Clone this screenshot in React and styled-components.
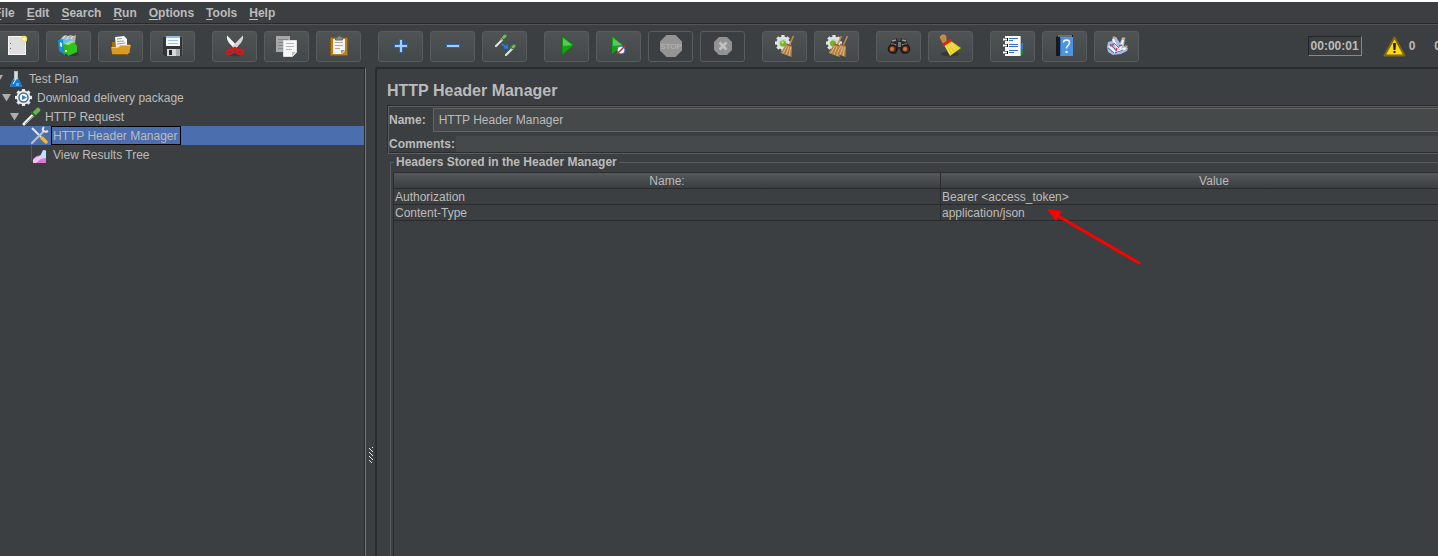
import React from "react";
import styled, { createGlobalStyle, css } from "styled-components";

const Global = createGlobalStyle`
  *, *::before, *::after { box-sizing: border-box; }
  body { margin: 0; background: #3c3f41; }
  body, button, input, table { font-family: "Liberation Sans", Arial, sans-serif; font-size: 12px; color: #bbbbbb; }
`;

const Frame = styled.div`
  display: flex;
  flex-direction: column;
  min-height: 100vh;
  overflow: hidden;
  background: #3c3f41;
  border-top: 2px solid #ffffff;
`;

const MenuBar = styled.nav`
  display: flex;
  gap: 12px;
  height: 22px;
  margin-left: -6px;
  align-items: center;
  border-bottom: 1px solid #27292a;
`;

const MenuItem = styled.button`
  border: 0;
  padding: 0;
  background: none;
  font-weight: bold;
  line-height: 20px;
`;

const Mnemonic = styled.span`
  text-decoration: underline;
  text-underline-offset: 2px;
`;

const ToolBar = styled.div`
  display: flex;
  align-items: center;
  gap: 17px;
  height: 43px;
  border-top: 1px solid #555555;
  margin-left: -6px;
  margin-right: -3px;
`;

const ToolGroup = styled.div`
  display: flex;
  gap: 7px;
`;

const ToolButton = styled.button`
  display: flex;
  align-items: center;
  justify-content: center;
  width: 45px;
  height: 31px;
  padding: 0;
  border: 1px solid #595c5d;
  border-radius: 3px;
  background: linear-gradient(#4f5354, #43484a);
  ${(p) => p.disabled && css`background: #3c3f41;`}
`;

const Status = styled.div`
  display: flex;
  align-items: center;
  margin-left: auto;
  font-weight: bold;
`;

const Timer = styled.time`
  height: 20px;
  line-height: 19px;
  border: 1px solid;
  border-color: #232526 #84898a #84898a #232526;
  padding: 0 2px;
  margin-right: 21px;
`;

const Count = styled.span`
  margin-left: 3px;
  & + & { margin-left: 19px; }
`;

const Body = styled.div`
  display: flex;
  flex: 1;
  min-width: 0;
`;

const TreePane = styled.aside`
  width: 366px;
  flex: none;
  border-top: 2px solid #282b2c;
  border-right: 1px solid #727576;
  box-shadow: inset -1px 0 #2b2d2e;
`;

const TreeRow = styled.div`
  display: flex;
  align-items: center;
  height: 19px;
  margin-right: 1px;
  padding-left: ${(p) => p.$depth * 8}px;
  background: ${(p) => (p.$selected ? "#4b6eaf" : "transparent")};
`;

const Toggle = styled.svg`
  flex: none;
  width: 9px;
  height: 9px;
  margin: 0 3px 0 -6px;
`;

const NodeIcon = styled.svg`
  flex: none;
  width: 19px;
  height: 19px;
`;

const NodeLabel = styled.span`
  height: 19px;
  line-height: 19px;
  margin-left: 2px;
  padding: 0 2px 0 1px;
  border: 1px solid ${(p) => (p.$selected ? "#000000" : "transparent")};
`;

const Splitter = styled.div`
  width: 11px;
  flex: none;
  display: flex;
  justify-content: center;
  border-right: 2px solid #2a2c2d;
  border-top: 2px solid #3c3f41;
  padding-top: 378px;
  padding-left: 2px;
`;

const Editor = styled.main`
  flex: 1;
  min-width: 0;
  display: flex;
  flex-direction: column;
  border-top: 2px solid #282b2c;
  padding-left: 10px;
  margin-right: -50px;
`;

const Title = styled.h1`
  margin: 11px 0 4px;
  font-size: 16px;
  line-height: 21px;
`;

const Fields = styled.div`
  border: 1px solid #2b2d2e;
  border-bottom-color: #5a5d5e;
  box-shadow: inset 1px 1px #5a5d5e, inset 0 -1px #2b2d2e;
  padding: 2px 0 0 1px;
`;

const Field = styled.div`
  display: flex;
  align-items: center;
  height: ${(p) => (p.$plain ? 16 : 24)}px;
  margin-bottom: ${(p) => (p.$plain ? 1 : 4)}px;
`;

const Label = styled.label`
  font-weight: bold;
  white-space: nowrap;
  margin-right: ${(p) => p.$gap}px;
`;

const Input = styled.input`
  flex: 1;
  min-width: 0;
  height: 100%;
  padding: 0 5px;
  border: ${(p) => (p.$plain ? "0" : "1px solid #646464")};
  background: #45494a;
  outline: 0;
`;

const Group = styled.fieldset`
  flex: 1;
  margin: 0 0 0 3px;
  min-width: 0;
  padding: 2px 0 0 2px;
  border: solid #5a5d5e;
  border-width: 1px 0 0 1px;
`;

const Legend = styled.legend`
  margin-left: 1px;
  padding: 0 2px;
  font-weight: bold;
  line-height: 16px;
`;

const TableBox = styled.div`
  height: 100%;
  border-left: 1px solid #2b2d2e;
  border-top: 1px solid #2b2d2e;
`;

const Table = styled.table`
  width: 100%;
  table-layout: fixed;
  border-collapse: separate;
  border-spacing: 0;
`;

const cell = css`
  height: 16px;
  padding: 2px 1px 0;
  line-height: 13px;
  border-right: 1px solid #292b2c;
  border-bottom: 1px solid #292b2c;
`;

const HeadCell = styled.th`
  ${cell}
  font-weight: normal;
  text-align: center;
  background: linear-gradient(#55585a, #3b3e40);
`;

const Cell = styled.td`
  ${cell}
`;

const Pointer = styled.svg`
  position: absolute;
  left: 1045px;
  top: 206px;
  width: 97px;
  height: 60px;
  pointer-events: none;
`;

function Gear({ cx, cy, r, fill = "#e2e4e5" }) {
  return (
    <g>
      {[0, 45, 90, 135].map((a) => (
        <path key={a} d={`M${cx} ${cy - r - 1}V${cy + r + 1}`} stroke={fill} strokeWidth="3.200" transform={`rotate(${a} ${cx} ${cy})`} />
      ))}
      <circle cx={cx} cy={cy} r={r - 0.6} fill={fill} />
      <circle cx={cx} cy={cy} r={r - 2.5} fill="#d2d5d6" />
    </g>
  );
}

function Broom() {
  return (
    <g>
      <path d="M14.500 13 19.500 2" stroke="#b98b52" strokeWidth="1.600" />
      <path d="M12.500 9.500 18 11.500 17.500 23 6.500 19Z" fill="#b5834b" />
      <path d="M13 12 9 19M15 12.500 12 20.500M16.500 13 15 22" stroke="#e1b67a" />
      <path d="M12.500 10 18 12" stroke="#805328" />
    </g>
  );
}

const art = {
  New: (
    <>
      <path d="M4 2h18v19H4z" fill="#f6f6f6" />
      <path d="M5 3h16v17H5z" fill="#dfdfdf" />
      <path d="M6 9.500h1M6 14.500h1" stroke="#666" />
      <circle cx="20" cy="5" r="3.200" fill="#eee36a" /><circle cx="20" cy="5" r="1.600" fill="#fffde0" />
    </>
  ),
  Templates: (
    <>
      <path d="M4 6 7 2l3-1 2 1 3-1 2 1 3-1-1 8H5z" fill="#aeb4b5" />
      <path d="m6 6 3-4m1 4 3-4m1 4 3-4" stroke="#e7e9e9" />
      <path d="m2 6 5-1 2 3v13l-6-4z" fill="#1490dc" /><path d="m7 6 8-1v6l-6 9z" fill="#65bff0" />
      <path d="m4 8 2 1v4l-2-1z" fill="#dff3ff" />
      <ellipse cx="16" cy="20" rx="7" ry="2" fill="#33393a" />
      <path d="m8 10 4-1v12l-4-2z" fill="#38b21d" /><path d="m12 11 6-3 3 4v6l-9 4z" fill="#31c51c" />
      <path d="m8 10 6-3 4 1-6 3z" fill="#95ef70" /><path d="M9 16h2v2H9z" fill="#e0ffd3" />
    </>
  ),
  Open: (
    <>
      <path d="M4 8h5v12H4z" fill="#a96d08" /><path d="M18 10h4v9h-4z" fill="#a96d08" />
      <path d="m7 3 9-1 3 3v8H8z" fill="#f7f7f7" />
      <path d="m9 5 5-.500M9 7.500l7-.500M9 10l8-1" stroke="#9a9a9a" />
      <path d="M3 13h7l3-2h10l-2 8-2 2H5l-1-2z" fill="#d99b22" />
      <path d="M4 13.500h6l3-2h9" stroke="#f2c65a" /><path d="M5 20.500h14" stroke="#8d5d08" />
    </>
  ),
  Save: (
    <>
      <path d="M3 2h20v20H5l-2-2z" fill="#343539" /><path d="M3.500 2.500h19v19" fill="none" stroke="#5d6064" />
      <path d="M6 2h14v10H6z" fill="#f4f8fb" /><path d="M6 2h14v2H6z" fill="#94bcdb" />
      <path d="M8 6.500h10M8 9.500h10" stroke="#a9bfce" />
      <path d="M7 15h13v7H7z" fill="#d5d7d8" /><path d="M9 16h3v5H9z" fill="#27282a" /><path d="M16 15h4v7h-4z" fill="#aaaeb0" />
    </>
  ),
  Cut: (
    <>
      <ellipse cx="13" cy="21" rx="7" ry="1.500" fill="#35393b" />
      <path d="M5 1.500c-1 5 3 9 8 13l3-2C12 9 9 5 5 1.500Z" fill="#f4f4f4" /><path d="M21 1.500c1 5-3 9-8 13l-3-2c4-3.500 7-7.500 11-11Z" fill="#d5d5d5" />
      <g fill="none" stroke="#df1515" strokeWidth="2.300"><ellipse cx="8" cy="18" rx="3" ry="2.200" transform="rotate(-25 8 18)" /><ellipse cx="18" cy="18" rx="3" ry="2.200" transform="rotate(25 18 18)" /><path d="m10 16 3-2 3 2" /></g>
    </>
  ),
  Copy: (
    <>
      <path d="M2 2h14v16H2z" fill="#a5a9a9" /><path d="M4 5.500h10M4 8.500h5M4 11.500h5M4 14.500h5" stroke="#838787" />
      <path d="M9.500 6.500h13v12l-4 4h-9z" fill="#f7f7f7" stroke="#dcdede" /><path d="M12 9.500h8M12 12.500h8M12 15.500h6" stroke="#b5b5b5" /><path d="M18 22v-4h4z" fill="#bbb" />
    </>
  ),
  Paste: (
    <>
      <path d="M4.500 3.500h17v18h-17z" fill="#c17d11" stroke="#8f5902" />
      <path d="M7 5h12v12l-3 3H7z" fill="#f3f3f3" /><path d="M9 8.500h8M9 11.500h8M9 14.500h5" stroke="#aaa" /><path d="M15 20v-4h4z" fill="#999" />
      <path d="M9.500 6V4h2l1-2h2l1 2h1v2z" fill="#858d84" stroke="#626a61" />
    </>
  ),
  Add: <path d="M11.500 5.500h3v5h5v3h-5v5h-3v-5h-5v-3h5z" fill="#a9cdf2" stroke="#2864b5" />,
  Remove: <path d="M6.500 10.500h13v3h-13z" fill="#a9cdf2" stroke="#2864b5" />,
  Toggle: (
    <>
      <path d="m4 12 6-6M14 21l6-6" stroke="#dfe3df" strokeWidth="2.200" strokeLinecap="round" />
      <path d="m10 5 3-3M20 14l2-2" stroke="#73b957" strokeWidth="3" strokeLinecap="round" />
      <path d="m9 3 4 4M18 12l3 3" stroke="#376b2b" strokeWidth="1" />
      <path d="m10 10 4 3" stroke="#227cec" strokeWidth="2" /><path d="m11.500 14.500 5 .500-1-5z" fill="#227cec" />
    </>
  ),
  Start: <><path d="M8 2 20 11 8 21z" fill="#12a512" /><path d="M9 4 18 11 9 12z" fill="#5ec45e" /><path d="m8 2 12 9-12 10z" fill="none" stroke="#077a07" strokeWidth=".7" /></>,
  StartNoPauses: (
    <>
      <path d="M6 2 17 11 6 20z" fill="#12a512" /><path d="m7 4 9 7-9 1z" fill="#5ec45e" />
      <circle cx="15" cy="16" r="4" fill="#f4f8ff" stroke="#3b6fa9" /><path d="m11 20 8-8" stroke="#d62323" strokeWidth="1.500" />
    </>
  ),
  Stop: (
    <>
      <path d="M8.500 1h9l6.500 6.500v9L17.500 23h-9L2 16.500v-9z" fill="#949494" />
      <text x="13" y="15" textAnchor="middle" fontSize="8" fontFamily="Liberation Sans, sans-serif" fill="#bababa">STOP</text>
    </>
  ),
  Shutdown: (
    <><path d="M9 3h8l5 5v8l-5 5H9l-5-5V8z" fill="#929292" /><path d="m9.500 8.500 7 7m0-7-7 7" stroke="#c2c2c2" strokeWidth="2.500" /></>
  ),
  Clear: <><Gear cx={11} cy={9} r={7} /><circle cx="11" cy="9.500" r="3" fill="#69bb16" /><circle cx="10.500" cy="8.500" r="1.200" fill="#bcec75" /><g transform="translate(2 0)"><Broom /></g></>,
  ClearAll: <><Gear cx={10} cy={9} r={7} /><circle cx="9" cy="9.500" r="3" fill="#69bb16" /><g transform="translate(-2 0)"><Broom /></g><g transform="translate(4 0)"><Broom /></g></>,
  Search: (
    <>
      <path d="m3 13 3-7 5-2 1 3h2l1-3 5 2 4 8-2 5-6 1-3-6-3 6-6-1-2-4z" fill="#28292b" />
      <path d="m6 7 4-1m6 0 4 1M5 10l5 1m6 0 5-1" stroke="#9a9b9d" strokeWidth="1.500" />
      <circle cx="6.500" cy="15" r="4" fill="#693718" stroke="#17181a" strokeWidth="1.500" /><circle cx="19.500" cy="15" r="4" fill="#693718" stroke="#17181a" strokeWidth="1.500" />
      <circle cx="6" cy="15" r="2" fill="#cf7440" /><circle cx="19" cy="15" r="2" fill="#cf7440" /><path d="M12 8h3v5h-3z" fill="#737577" />
    </>
  ),
  Reset: (
    <>
      <ellipse cx="12" cy="20" rx="9" ry="2.500" fill="#35393b" />
      <path d="m2 3 2-2h3l1 2v4l-3 2-2-4z" fill="#c88733" stroke="#e0ac63" strokeWidth=".6" />
      <path d="m6 11 7-4 10 7-11 8z" fill="#e6ce22" />
      <path d="m8 12 4 8m-2-9 5 8m-3-9 6 7m-5-8 7 6" stroke="#fff28c" strokeWidth=".8" />
      <path d="m5 11 8-5" stroke="#d8291c" strokeWidth="3" />
    </>
  ),
  FunctionHelper: (
    <>
      <path d="M20 9h3v6h-3z" fill="#2479d7" /><path d="M20 15h3v6h-3z" fill="#14901c" />
      <path d="M5 2h16v20H5z" fill="#fafafa" /><path d="M20.500 2v20" stroke="#bbb" />
      <path d="M4 5.500h4M4 11.500h4M4 18.500h4" stroke="#111" strokeWidth="3" /><path d="M3 5.500h4M3 11.500h4M3 18.500h4" stroke="#fff" strokeWidth="2" />
      <path d="M9 4.500h9M9 6.500h4M9 10.500h9M9 12.500h9M9 16.500h9M9 18.500h5" stroke="#3576cd" />
    </>
  ),
  Help: (
    <>
      <path d="M4 3 7 1h14v21H4z" fill="#17191c" /><path d="M8 3h13v19H8z" fill="#4b93e3" /><path d="M6 2h14" stroke="#b8c7d4" /><path d="M8.500 4v17" stroke="#2f6fba" />
      <path d="M11.500 8.500c0-3.500 6-3.500 6 0 0 3-3 3-3 6" fill="none" stroke="#fff" strokeWidth="1.500" /><path d="M13.500 17h2v2h-2z" fill="#fff" />
    </>
  ),
  Plugins: (
    <>
      <path d="M3 13 4 8l4-1 1-4h3l4 6 2-5h3l-1 8 4 2-1 3-6 3-8 1-5-3z" fill="#a9b8dc" />
      <path d="m5 12 6 6M9 5l5 11m5-10-3 9m6-1-9 4" stroke="#f5f8ff" strokeWidth="2" fill="none" />
      <path d="m4 14 6 5m-4-9 7 7m-3-8 5 5m-4 5 8-3" stroke="#536fc0" fill="none" /><path d="m6 12 4-2m2 7 1-3m2-2 3-1" stroke="#cf4256" strokeWidth="1.500" />
      <path d="m8 4 2-2 3 2zm9 0 3-1 2 2zm4 7 3 1-2 3z" fill="#e3a13d" />
    </>
  ),
};

const toolGroups = [
  ["New", "Templates", "Open", "Save"],
  ["Cut", "Copy", "Paste"],
  ["Add", "Remove", "Toggle"],
  ["Start", "StartNoPauses", "Stop", "Shutdown"],
  ["Clear", "ClearAll"],
  ["Search", "Reset"],
  ["FunctionHelper", "Help", "Plugins"],
];
const disabledTools = ["Stop", "Shutdown"];

const nodeArt = {
  plan: (
    <>
      <path d="M8 2h4v7l4 8-1 1H5l-1-1 4-8z" fill="#aebdca" /><path d="m7 11 6-1 3 7-1 1H5l-1-1z" fill="#1778d0" />
      <path d="M10 3v7l-3 5" fill="none" stroke="#fff" /><path d="M10 14h3v3h-3z" fill="#59b0f1" />
    </>
  ),
  threads: (
    <><Gear cx={9.5} cy={9.5} r={7.5} fill="#e9ecef" /><circle cx="9.500" cy="9.500" r="4.500" fill="#fff" stroke="#4a6d98" strokeWidth="1.500" /><path d="m8 7 5 2.500L8 12z" fill="#347fc4" /></>
  ),
  sampler: (
    <><path d="m2 17 9-9" stroke="#f1f4f1" strokeWidth="3" strokeLinecap="round" /><path d="m3 17 8-8" stroke="#969d96" /><path d="m13 6 3-3" stroke="#67b156" strokeWidth="4.500" strokeLinecap="round" /><path d="m9 5 5 5" stroke="#2c6626" strokeWidth="2" /></>
  ),
  config: (
    <><path d="m2 2 9 9" stroke="#e6e6e6" strokeWidth="2" /><path d="m12 12 4 4" stroke="#edb928" strokeWidth="3.500" strokeLinecap="round" /><path d="m2 17 12-12" stroke="#bac0c2" strokeWidth="2.200" strokeLinecap="round" /><path d="M14 1c-3 3 0 6 4 4" fill="none" stroke="#e1e5e5" strokeWidth="2" /></>
  ),
  listener: (
    <><path d="M1.500 0v16H4" fill="none" stroke="#5d5365" /><path d="m3 14 4-3 4-1 5-5v13H3z" fill="#dd75d5" /><path d="m3 15 3-3 4-1 4-6 2 1v7l-5 1-5 4H3z" fill="#f4c0ed" /><path d="m10 12 3-7 3 1v7z" fill="#b9e4ff" /></>
  ),
};

const nodes = [
  { label: "Test Plan", icon: "plan", depth: 0, open: true },
  { label: "Download delivery package", icon: "threads", depth: 1, open: true },
  { label: "HTTP Request", icon: "sampler", depth: 2, open: true },
  { label: "HTTP Header Manager", icon: "config", depth: 3, selected: true },
  { label: "View Results Tree", icon: "listener", depth: 3 },
];

const headers = [
  ["Authorization", "Bearer <access_token>"],
  ["Content-Type", "application/json"],
];

export default function App() {
  return (
    <Frame>
      <Global />
      <MenuBar>
        {["File", "Edit", "Search", "Run", "Options", "Tools", "Help"].map((m) => (
          <MenuItem key={m}><Mnemonic>{m[0]}</Mnemonic>{m.slice(1)}</MenuItem>
        ))}
      </MenuBar>
      <ToolBar role="toolbar">
        {toolGroups.map((group) => (
          <ToolGroup key={group[0]}>
            {group.map((name) => (
              <ToolButton key={name} aria-label={name} disabled={disabledTools.includes(name)}>
                <svg width="25" height="25" viewBox="0 0 25 25" fill="none">{art[name]}</svg>
              </ToolButton>
            ))}
          </ToolGroup>
        ))}
        <Status>
          <Timer>00:00:01</Timer>
          <svg width="23" height="21" viewBox="0 0 23 21" aria-label="Warnings">
            <path d="M11.500 1.500 21.500 19.500H1.500z" fill="#f5cc09" stroke="#806b11" strokeWidth="2" strokeLinejoin="round" />
            <path d="M11.500 4 19 18H4z" fill="#ffdb16" /><path d="M10 7h3l-.500 7h-2zM10.500 15h2v2h-2z" fill="#202020" />
          </svg>
          <Count>0</Count>
          <Count>0</Count>
        </Status>
      </ToolBar>
      <Body>
        <TreePane role="tree">
          {nodes.map((n) => (
            <TreeRow key={n.label} role="treeitem" aria-selected={!!n.selected} $depth={n.depth} $selected={n.selected}>
              <Toggle viewBox="0 0 9 9">{n.open && <path d="M0 1h9L4.500 8.500z" fill="#adadad" />}</Toggle>
              <NodeIcon viewBox="0 0 19 19" fill="none">{nodeArt[n.icon]}</NodeIcon>
              <NodeLabel $selected={n.selected}>{n.label}</NodeLabel>
            </TreeRow>
          ))}
        </TreePane>
        <Splitter>
          <svg width="5" height="16" viewBox="0 0 5 16" shapeRendering="crispEdges">
            {Array.from({ length: 16 }, (_, y) => (
              <path key={y} d={`M${[3, 0, 1, 2][y % 4]} ${y}h1v1h-1z`} fill="#e4e4e4" />
            ))}
          </svg>
        </Splitter>
        <Editor>
          <Title>HTTP Header Manager</Title>
          <Fields>
            <Field>
              <Label htmlFor="name" $gap={7}>Name:</Label>
              <Input id="name" defaultValue="HTTP Header Manager" />
            </Field>
            <Field $plain>
              <Label htmlFor="comments" $gap={1}>Comments:</Label>
              <Input id="comments" $plain />
            </Field>
          </Fields>
          <Group>
            <Legend>Headers Stored in the Header Manager</Legend>
            <TableBox>
              <Table>
                <thead><tr><HeadCell>Name:</HeadCell><HeadCell>Value</HeadCell></tr></thead>
                <tbody>
                  {headers.map(([name, value]) => (
                    <tr key={name}><Cell>{name}</Cell><Cell>{value}</Cell></tr>
                  ))}
                </tbody>
              </Table>
            </TableBox>
          </Group>
        </Editor>
      </Body>
      <Pointer viewBox="0 0 97 60">
        <path d="M94 57 13 10" stroke="#ff0000" strokeWidth="3" strokeLinecap="round" />
        <path d="M2 3 17 5 11 15z" fill="#ff0000" />
      </Pointer>
    </Frame>
  );
}
